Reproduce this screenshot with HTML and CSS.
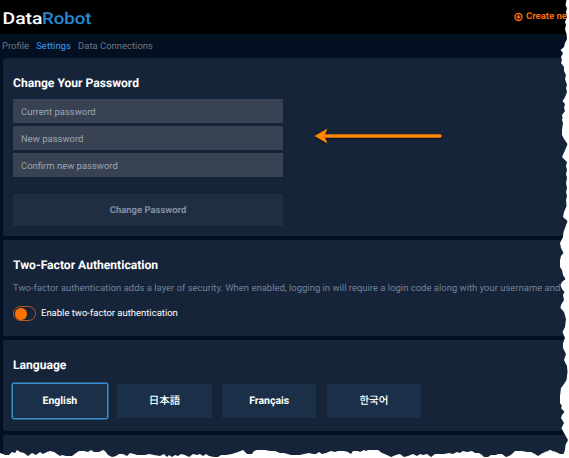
FILE: index.html
```html
<!DOCTYPE html>
<html lang="en">
<head>
<meta charset="utf-8">
<title>DataRobot Settings</title>
<link rel="stylesheet" href="styles.css">
</head>
<body>
<header class="topbar">
  <svg class="logo" viewBox="0 0 90 20" role="img" aria-label="DataRobot"><text x="-.5" y="15.7" textLength="40" lengthAdjust="spacingAndGlyphs" class="logo-data">Data</text><text x="39" y="15.7" textLength="49.5" lengthAdjust="spacingAndGlyphs" class="logo-robot">Robot</text></svg>
  <div class="create"><svg class="plus" viewBox="0 0 9 9"><circle cx="4.5" cy="4" r="3.5"/><path d="M4.5 2v4M2.5 4h4"/></svg><span>Create ne</span></div>
</header>
<nav class="tabs"><a>Profile</a><a class="active">Settings</a><a>Data Connections</a></nav>
<main class="panels">
  <section class="panel password">
    <h2>Change Your Password</h2>
    <form class="fields">
      <div class="field">Current password</div>
      <div class="field">New password</div>
      <div class="field">Confirm new password</div>
      <div class="submit">Change Password</div>
    </form>
  </section>
  <section class="panel twofactor">
    <h2>Two-Factor Authentication</h2>
    <p>Two-factor authentication adds a layer of security. When enabled, logging in will require a login code along with your username and</p>
    <div class="toggle-row"><span class="toggle"></span><span class="toggle-label">Enable two-factor authentication</span></div>
  </section>
  <section class="panel language">
    <h2>Language</h2>
    <div class="langs">
      <div class="lang selected">English</div>
      <div class="lang ja" lang="ja">日本語</div>
      <div class="lang">Français</div>
      <div class="lang ko" lang="ko">한국어</div>
    </div>
  </section>
  <section class="panel last"></section>
</main>
<svg class="arrow" viewBox="0 0 136 24"><path d="M11 12H126" /><path class="head" d="M.5 12 13.5 4.5 10.5 12 13.5 19.5Z"/></svg>
<svg class="torn" viewBox="0 0 569 458">
<path d="M569 0H566.5L565.5 5 567 8 566 12 567 17 565 22 566 25 565 29 566.5 34 567 39 565 43 564 47 560.5 50 563 53 561 57 562 60 561 63 564 67 564 71 566 75 565 79 567 85 566 88 567 92 565 97 564 99 562.5 101 565 104 564 108 565 111 562 115 562.5 118 562 120 563 123 562 130 562 135 564 139 567.5 144 566 148 562 157 567 162 566 166 567 170 566 174 567 178 566 183 567 188 566 192 567 196 566 200 566.5 206 564 212 563 217 567.5 221 565 228 563.5 232 563 237 560 243 561 248 563.5 253 561 256 560 260 560 267 562 270 563 275 565.5 279 562 282 560.5 285 562 289 564.5 292 563 295 564 300 561 305 560.5 308 564 312 566 319 565 327 562.5 332 565 338 563 343 563 348 566 354 564 360 567 366 567.5 372 566.5 380 564 384 561 388 560 396 560 403 562 406 561 408 564.5 412 562 415 561 418 564 423 561.5 428 564 433 568 440 565.5 445 565 450 563.5 454 560 454 556 452 552.5 451 550 449.7 548 451 545 452 543 453 541 454 538 456 535 454 531 452 527 452 522 451 518 451 515 451 512 454 509 456 506 457 502 454 498 454 496 455 491 455 488 457 484 457 482 455 479 453 475 453 472 451 467 452 463 451 460 453 457 452 453 454 449 453 444 454 439 454 435 454 431 457 427 454 423 455 420 454 417 456 413 454 408 456 404 457 400 454 396 455 391 457 387 455 382 453 378 450 372 450 368 450 366 451 364 450 362 451 360 452 358 451 355 451 353 451 351 454 348 452 344 451 341 451 338 451 335 452 331 451 326 453 322 454 319 452 316 454 313 454 309 453 304 454 300 455 296 455 291 455 284 453 280 453 275 451 270 451 265 450 261 450 257 450 254 451 252 454 247 454 243 450 238 452 232 454 226 455 221 455 218 457 214 457 209 456 206 454 203 456 200 454 197 455 193 454 189 457 185 455 181 454 178 456 175 455 172 457 169 455 167 457 164 454 160 456 154 455 149 454 145 455 141 455 137 455 134 454 130 453 127 456 123 454 119 454 116 456 112 457 108 455 105 451 103 450 99 452 94 452 91 450 88 452 84 451 79 451 76 453 72 456 66 456 62 455 60 456 57 454 54 452 50 451 47 452 43 454 40 452 36 455 32 453 28 456 24 453 20 452 17 450 15 453 12 452 9 455 5 455 3 454 0 453V458H569Z"/></svg>
</body>
</html>
```
FILE: styles.css
```css
* { box-sizing: border-box; }
body {
  margin: 0;
  width: 569px;
  height: 458px;
  overflow: hidden;
  position: relative;
  background: #031022;
  font: 9.47px/14px Roboto, "Noto Sans CJK JP", sans-serif;
  text-rendering: geometricPrecision;
  color: #fff;
}
.topbar {
  height: 34px;
  background: #000;
  display: flex;
  justify-content: space-between;
  padding-left: 3px;
}
.logo { width: 90px; height: 20px; margin-top: 8px; overflow: visible; }
.logo text { font: 500 16.5px Roboto, sans-serif; }
.logo-data { fill: #fff; }
.logo-robot { fill: #2589d4; }
.create {
  width: 55px;
  display: flex;
  align-items: center;
  gap: 3px;
  color: #f56a0a;
  font-size: 9.5px;
  font-weight: 700;
  white-space: nowrap;
}
.plus { width: 9px; height: 9px; flex: none; overflow: visible; fill: none; stroke: #f56a0a; stroke-width: 1.4; }
.tabs {
  height: 24px;
  padding: 6px 0 0 2px;
  display: flex;
  gap: 7.2px;
  color: #70757d;
}
.active { color: #3a9ae4; }
.panels { display: flex; flex-direction: column; gap: 4px; padding-left: 3px; }
.panel {
  background: #16243a;
  border-radius: 2px 0 0 2px;
  padding-left: 10px;
  overflow: hidden;
}
h2 { margin: 0; font-size: 12.1px; line-height: 16px; font-weight: 700; white-space: nowrap; }
.password { height: 178px; padding-top: 17px; }
.fields { width: 270px; margin: 8px 0 0; display: flex; flex-direction: column; gap: 3px; }
.field {
  height: 24px;
  padding: 0 8px;
  line-height: 27px;
  background: #384253;
  border-radius: 1px;
  color: #9ba4b0;
}
.submit {
  height: 32px;
  margin-top: 14px;
  line-height: 34px;
  text-align: center;
  background: #202e41;
  color: #8290a5;
  font-weight: 700;
}
.twofactor { height: 96px; padding-top: 17px; }
.twofactor p { margin: 9px 0 0; color: #708097; white-space: nowrap; }
.toggle-row { display: flex; align-items: center; gap: 5px; margin-top: 10px; height: 15px; }
.toggle-label { padding-top: 1px; }
.toggle {
  width: 23px;
  height: 15px;
  padding: 1px;
  border: 1px solid #b85a20;
  border-radius: 8px;
}
.toggle::before {
  content: "";
  display: block;
  width: 11.5px;
  height: 11.5px;
  border-radius: 50%;
  background: #ff7300;
}
.language { height: 91px; padding-top: 17px; }
.langs { display: flex; gap: 10.2px; margin: 11px 0 0 -.4px; }
.lang {
  width: 94.5px;
  height: 34px;
  line-height: 34px;
  text-align: center;
  font-size: 10.5px;
  font-weight: 700;
  background: #1b3048;
}
.ko { font-family: "Noto Sans CJK KR", sans-serif; font-weight: 500; line-height: 33px; }
.ja { font-family: "Noto Sans CJK JP", sans-serif; font-weight: 500; line-height: 33px; }
.selected { box-shadow: 0 0 0 1.5px #388fd0; border-radius: 1px; }
.last { height: 30px; }
.arrow {
  position: absolute;
  left: 314px;
  top: 124px;
  width: 136px;
  height: 24px;
  fill: none;
  stroke: #ff8500;
  stroke-width: 3.6;
  stroke-linecap: round;
  filter: drop-shadow(0 1px 1px #0009);
}
.arrow .head { fill: #ff8500; stroke: none; }
.torn { position: absolute; left: 0; top: 0; width: 569px; height: 458px; fill: #fff; }
```
